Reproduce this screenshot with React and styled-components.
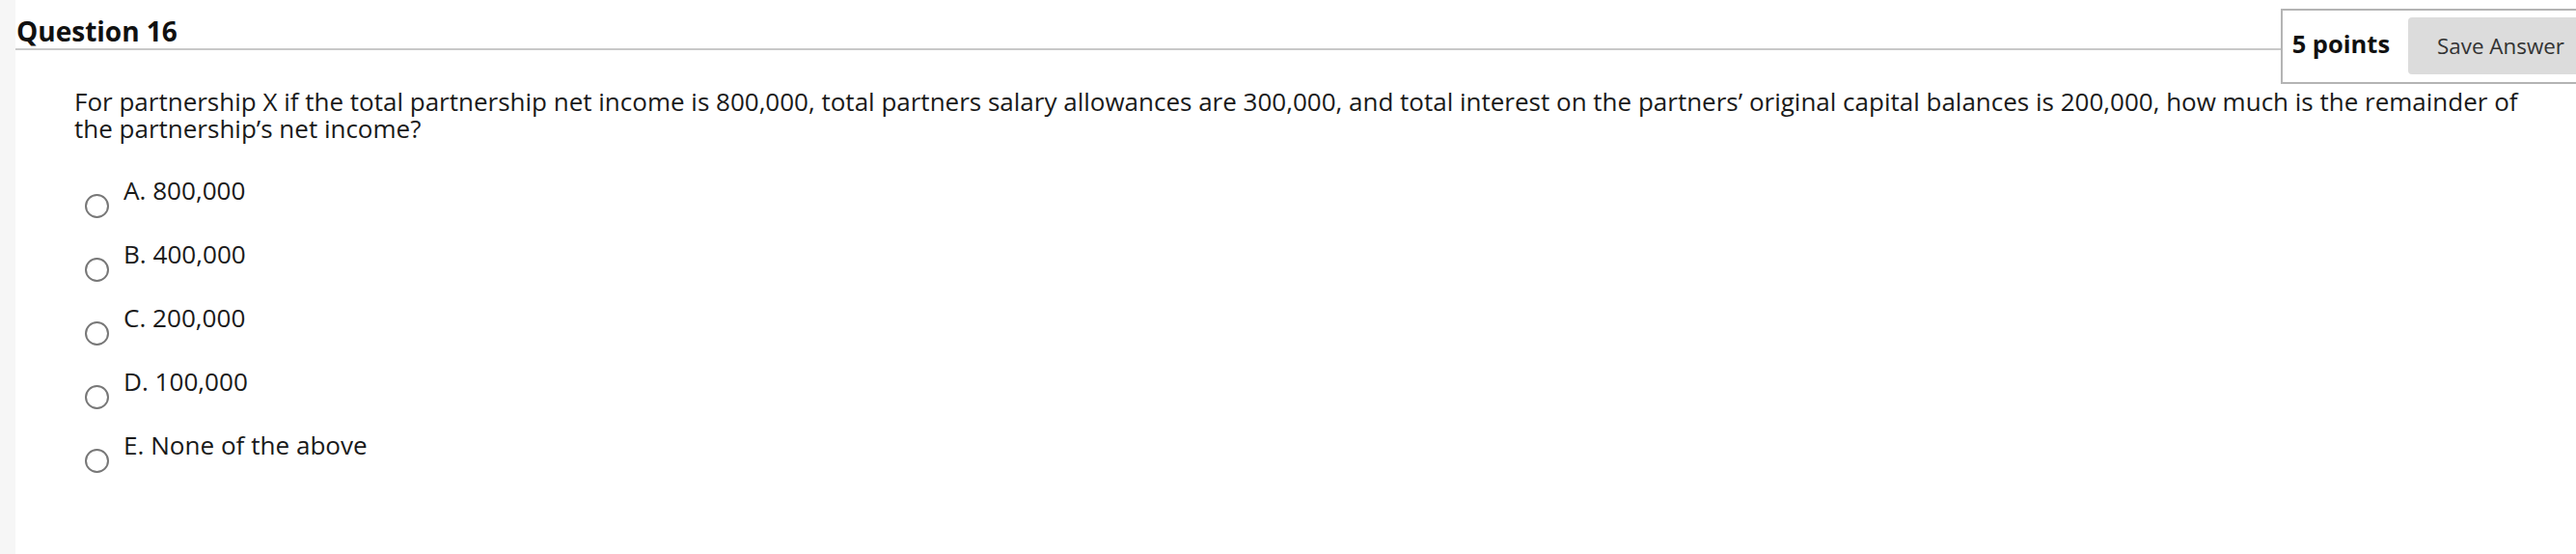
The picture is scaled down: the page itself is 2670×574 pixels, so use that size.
import React from 'react';
import styled, { createGlobalStyle } from 'styled-components';

const Global = createGlobalStyle`
  html, body {
    margin: 0;
    padding: 0;
    background: #ffffff;
    overflow: hidden;
    font-family: "Open Sans", "Liberation Sans", sans-serif;
    color: #1a1a1a;
  }
`;

const options = ['A. 800,000', 'B. 400,000', 'C. 200,000', 'D. 100,000', 'E. None of the above'];

const App = () => {
  return (
    <>
      <Global />
      <Page>
        <Strip />
        <Main>
          <Header>
            <Title>Question 16</Title>
            <PointsBox>
              <Points>5 points</Points>
              <SaveButton>Save Answer</SaveButton>
            </PointsBox>
          </Header>
          <QuestionText>
            For partnership X if the total partnership net income is 800,000, total partners salary allowances are 300,000, and total interest on the partners’ original capital balances is 200,000, how much is the remainder of the partnership’s net income?
          </QuestionText>
          <Options>
            {options.map((o) => (
              <Option key={o}>
                <Radio />
                <Label>{o}</Label>
              </Option>
            ))}
          </Options>
        </Main>
      </Page>
    </>
  );
};

const Page = styled.div`
  display: flex;
  width: 2670px;
  min-height: 574px;
`;

const Strip = styled.div`
  width: 16px;
  flex-shrink: 0;
  background: #f6f6f6;
`;

const Main = styled.div`
  flex: 1;
  min-width: 0;
  display: flex;
  flex-direction: column;
`;

const Header = styled.div`
  display: flex;
  align-items: flex-start;
`;

const Title = styled.h2`
  flex: 1;
  margin: 0;
  padding: 14px 0 0 1px;
  font-size: 28px;
  line-height: 36px;
  font-weight: 700;
  color: #111;
  border-bottom: 2px solid #c8c8c8;
`;

const PointsBox = styled.div`
  margin-top: 9px;
  display: flex;
  align-items: center;
  padding: 7px 0 8px 10px;
  border: 2px solid #b4b4b4;
  border-right: none;
  margin-right: -18px;
`;

const Points = styled.span`
  font-size: 25.5px;
  font-weight: 700;
  color: #111;
  margin-right: 19px;
  padding-bottom: 6px;
`;

const SaveButton = styled.button`
  height: 59px;
  padding: 0 30px;
  border: none;
  border-radius: 4px;
  background: #dcdcdc;
  color: #333;
  font-family: "Open Sans", "Liberation Sans", sans-serif;
  font-size: 22.4px;
  white-space: nowrap;
`;

const QuestionText = styled.p`
  margin: 4px 0 0;
  padding: 0 30px 0 61px;
  font-size: 26px;
  line-height: 28px;
  color: #1a1a1a;
`;

const Options = styled.div`
  display: flex;
  flex-direction: column;
  gap: 23px;
  margin-top: 36px;
  padding-left: 72px;
`;

const Option = styled.div`
  display: flex;
  align-items: flex-start;
  gap: 15px;
`;

const Radio = styled.span`
  width: 25px;
  height: 25px;
  box-sizing: border-box;
  margin-top: 18px;
  border: 2px solid #777;
  border-radius: 50%;
  flex-shrink: 0;
`;

const Label = styled.span`
  font-size: 26.1px;
  line-height: 28px;
  color: #1a1a1a;
`;

export default App;
